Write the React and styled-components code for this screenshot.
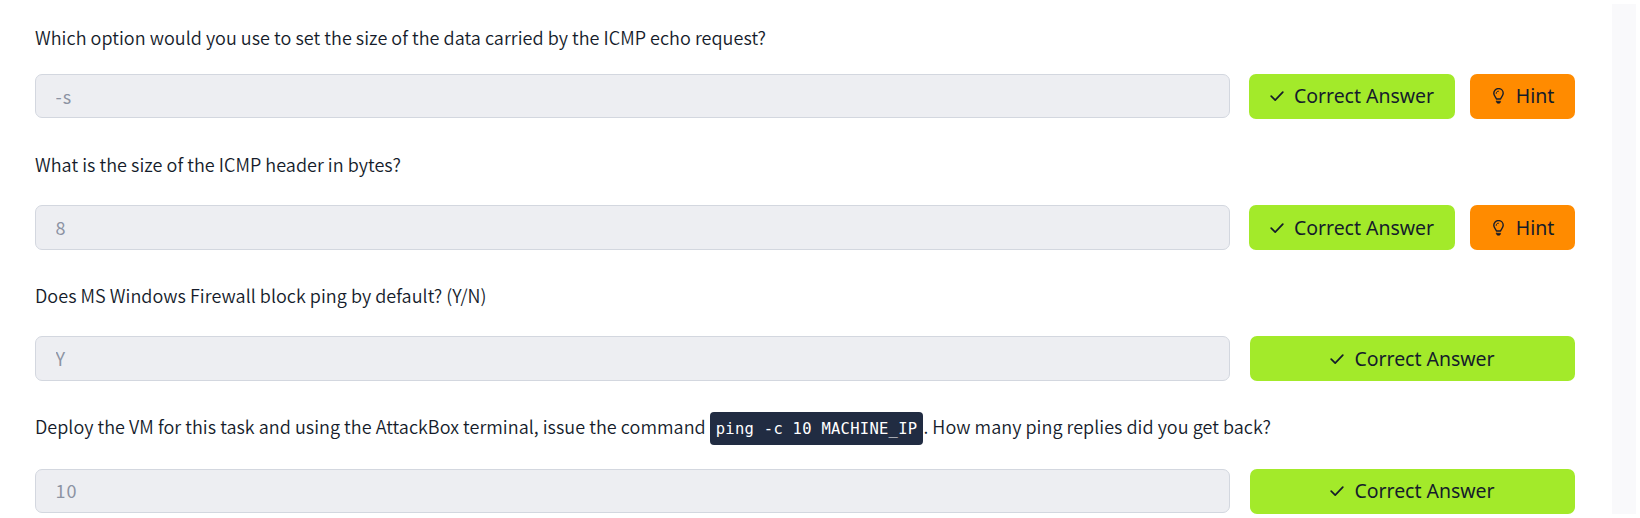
import React from "react";
import styled, { createGlobalStyle } from "styled-components";

const GlobalStyle = createGlobalStyle`
  *, *::before, *::after { box-sizing: border-box; }
  body { margin: 0; background: #fff; overflow: hidden; }
`;

const Page = styled.div`
  display: flex;
  height: 518px;
  padding: 4px 4px 4px 0;
`;

const Questions = styled.main`
  flex: 1;
  display: flex;
  flex-direction: column;
  gap: 31px;
  padding: 19px 37px 0 35px;
`;

const Gutter = styled.aside`
  width: 24px;
  background: #f9f9fb;
`;

const Item = styled.section`
  display: flex;
  flex-direction: column;
  gap: ${(p) => p.$gap}px;
`;

const Question = styled.p`
  margin: 0;
  height: 30px;
  line-height: 28px;
  white-space: nowrap;
  font-family: "Noto Sans CJK SC", "Noto Sans", sans-serif;
  font-weight: 350;
  font-size: 18px;
  letter-spacing: 0.04px;
  color: #151c2b;
`;

const Code = styled.code`
  display: inline-block;
  height: 33px;
  margin: -5px 0 -3px;
  line-height: 34px;
  padding: 0 6px;
  border-radius: 4px;
  vertical-align: middle;
  background: #212c42;
  color: #fff;
  font-family: "DejaVu Sans Mono", monospace;
  font-size: 15.5px;
  font-weight: 400;
  letter-spacing: 0.27px;
`;

const AnswerRow = styled.div`
  display: flex;
  justify-content: space-between;
  align-items: flex-start;
  height: 45px;
`;

const AnswerInput = styled.input`
  width: 1195px;
  height: ${(p) => p.$height}px;
  padding: 0 19px ${(p) => p.$padBottom}px 19.5px;
  border: 1px solid #d3d7df;
  border-radius: 7px;
  background: #edeef2;
  color: #8c93a3;
  font-family: "Noto Sans CJK SC", "Noto Sans", sans-serif;
  font-size: 18px;
  letter-spacing: 1px;
`;

const Actions = styled.div`
  display: flex;
  gap: 15px;
  width: ${(p) => (p.$split ? 326 : 325)}px;
`;

const Button = styled.button`
  display: flex;
  flex: ${(p) => (p.$width ? `0 0 ${p.$width}px` : "1")};
  align-items: center;
  justify-content: center;
  gap: ${(p) => p.$gap}px;
  height: 45px;
  padding: 0 0 ${(p) => (p.$raised ? 2 : 0)}px ${(p) => (p.$hint ? 2 : 0)}px;
  border: 0;
  border-radius: 7px;
  background: ${(p) => (p.$hint ? "#ff8b00" : "#a3ea2a")};
  color: #151c2b;
  font-family: "Noto Sans", sans-serif;
  font-size: 19.5px;
  white-space: nowrap;
`;

const Label = styled.span`
  line-height: 43px;
  letter-spacing: -0.03px;
`;

const CheckIcon = () => (
  <svg width="14" height="14" viewBox="0 0 14 14" fill="none" stroke="currentColor" strokeWidth="1.7" strokeLinecap="round" strokeLinejoin="round">
    <path d="M1.2 7.2 5.2 11.1 12.8 3.2" />
  </svg>
);

const BulbIcon = () => (
  <svg width="11" height="16" viewBox="0 0 11 16" fill="none" stroke="currentColor" strokeWidth="1.4" strokeLinecap="round" strokeLinejoin="round">
    <path d="M3.4 11C3.2 9.4.8 8.2.8 5.3a4.7 4.7 0 0 1 9.4 0C10.2 8.2 7.8 9.4 7.6 11Z" />
    <path d="M3.2 5.4c0-1.3.9-2.2 2.2-2.2" strokeWidth="1" />
    <path d="M3.4 13.2h4.2c0 1.5-.8 2.1-2.1 2.1s-2.1-.6-2.1-2.1Z" fill="currentColor" strokeWidth=".6" />
  </svg>
);

const items = [
  { gap: 21, height: 44, answer: "-s", hint: true, text: "Which option would you use to set the size of the data carried by the ICMP echo request?" },
  { gap: 25, height: 45, answer: "8", hint: true, text: "What is the size of the ICMP header in bytes?" },
  { gap: 25, height: 45, answer: "Y", text: "Does MS Windows Firewall block ping by default? (Y/N)" },
  {
    gap: 27,
    height: 44,
    padBottom: 3,
    answer: "10",
    text: (
      <>
        Deploy the VM for this task and using the AttackBox terminal, issue the command <Code>ping -c 10 MACHINE_IP</Code>. How many ping replies did you get back?
      </>
    ),
  },
];

export default function App() {
  return (
    <>
      <GlobalStyle />
      <Page>
        <Questions>
          {items.map((item) => (
            <Item key={item.answer} $gap={item.gap}>
              <Question>{item.text}</Question>
              <AnswerRow>
                <AnswerInput $height={item.height} $padBottom={item.padBottom ?? 1} value={item.answer} readOnly />
                <Actions $split={item.hint}>
                  <Button $gap={10} $raised={item.height === 44} $width={item.hint ? 206 : undefined}>
                    <CheckIcon />
                    <Label>Correct Answer</Label>
                  </Button>
                  {item.hint && (
                    <Button $hint $gap={12} $raised={item.height === 44} $width={105}>
                      <BulbIcon />
                      <Label>Hint</Label>
                    </Button>
                  )}
                </Actions>
              </AnswerRow>
            </Item>
          ))}
        </Questions>
        <Gutter />
      </Page>
    </>
  );
}
